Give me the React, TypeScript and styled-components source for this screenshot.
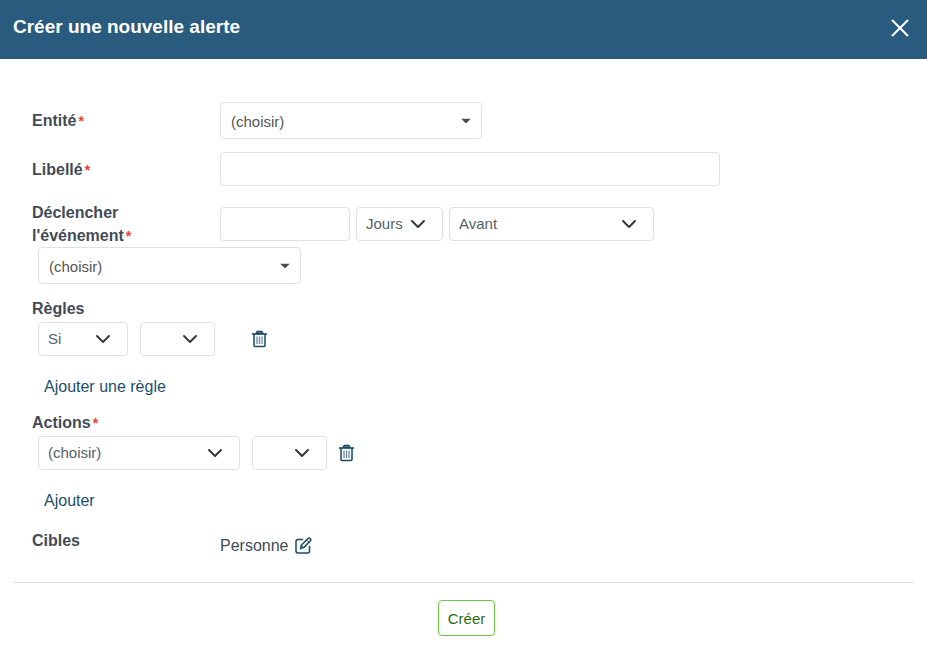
import React, { useId } from "react";
import styled, { createGlobalStyle, css } from "styled-components";

const GlobalStyle = createGlobalStyle`
  *, *::before, *::after { box-sizing: border-box; }
  body {
    margin: 0;
    background: #fff;
    color: #434c56;
    font-family: "Liberation Sans", Arial, sans-serif;
    font-size: 16px;
    line-height: 23px;
  }
`;

const Header = styled.header`
  display: flex;
  justify-content: space-between;
  align-items: flex-start;
  min-height: 59px;
  padding: 15px 17px 0 13px;
  background: #295b7e;
  color: #fff;
`;

const Title = styled.h1`
  margin: 0;
  font-size: 19px;
  font-weight: bold;
  line-height: 23px;
`;

const IconButton = styled.button`
  display: inline-flex;
  align-items: center;
  justify-content: center;
  padding: 0;
  border: 0;
  background: none;
  color: #184a66;
  cursor: pointer;
`;

const CloseButton = styled(IconButton)`
  padding-top: 3px;
  color: #fff;
`;

const Form = styled.form`
  padding: 43px 13px 0;
`;

const Fields = styled.div`
  padding: 0 19px 25px;
`;

const Row = styled.div<{ $top?: number; $align?: "center" | "start" }>`
  display: grid;
  grid-template-columns: 188px minmax(0, 1fr);
  align-items: ${(p) => p.$align ?? "center"};
  margin-top: ${(p) => p.$top ?? 0}px;
`;

const labelStyle = css`
  font-weight: bold;
  line-height: 23px;
`;

const Label = styled.label`
  ${labelStyle}
  max-width: 130px;
`;

const GroupLabel = styled.span`
  ${labelStyle}
  display: block;
`;

const Required = styled.span`
  margin-left: 2px;
  color: #f5392f;
  font-size: 14px;
  font-weight: bold;
  line-height: 1;
`;

const Controls = styled.div<{ $gap?: number }>`
  display: flex;
  align-items: center;
  gap: ${(p) => p.$gap ?? 6}px;
`;

const EventControls = styled(Controls)`
  padding-top: 6px;
`;

const Group = styled.section`
  margin-top: 13px;
`;

const Indent = styled.div`
  padding: 0 6px;
`;

const GroupControls = styled(Controls)`
  margin: 2px 6px 0;
`;

const fieldStyle = css`
  height: 34px;
  border: 1px solid #dee1e3;
  border-radius: 4px;
  background: #fff;
  color: #555f69;
  font-family: inherit;
  font-size: 15px;
`;

const TextInput = styled.input<{ $width: number }>`
  ${fieldStyle}
  width: ${(p) => p.$width}px;
  max-width: 100%;
  padding: 0 9px;
`;

const SelectWrap = styled.span<{ $width: number }>`
  position: relative;
  display: block;
  width: ${(p) => p.$width}px;
  max-width: 100%;
`;

const SelectBox = styled.select<{ $tall?: boolean }>`
  ${fieldStyle}
  display: block;
  width: 100%;
  padding: 0 9px 2px;
  appearance: none;
  ${(p) =>
    p.$tall &&
    css`
      height: 37px;
      padding: 2px 10px 0;
      color: #555;
    `}
`;

const Arrow = styled.svg<{ $right: number }>`
  position: absolute;
  top: 50%;
  right: ${(p) => p.$right}px;
  transform: translateY(-50%);
  pointer-events: none;
`;

const TrashButton = styled(IconButton)<{ $space: number }>`
  margin-left: ${(p) => p.$space}px;
`;

const AddLink = styled.a`
  display: inline-block;
  margin: 19px 12px 0;
  color: #204f6b;
  text-decoration: none;
`;

const Target = styled.div`
  display: flex;
  align-items: center;
  gap: 6px;
  padding-top: 5px;
`;

const Footer = styled.footer`
  display: flex;
  justify-content: center;
  padding: 17px 0 27px 6px;
  border-top: 1px solid #d9dbdc;
`;

const SubmitButton = styled.button`
  height: 36px;
  padding: 0 9px;
  border: 1px solid #6cc644;
  border-radius: 4px;
  background: #fff;
  color: #2b6a11;
  font-family: inherit;
  font-size: 15px;
  cursor: pointer;
`;

type SelectProps = {
  label?: string;
  id?: string;
  value: string;
  width: number;
  caret?: boolean;
};

function Select({ label, id, value, width, caret }: SelectProps) {
  return (
    <SelectWrap $width={width}>
      <SelectBox id={id} aria-label={label} $tall={caret} defaultValue={value}>
        <option value={value}>{value}</option>
      </SelectBox>
      {caret ? (
        <Arrow $right={11} width="10" height="5" viewBox="0 0 10 5" aria-hidden="true">
          <path d="M0 0h10L5 5z" fill="#4d4d4d" />
        </Arrow>
      ) : (
        <Arrow $right={17} width="16" height="10" viewBox="0 0 16 10" aria-hidden="true">
          <path
            d="M2 2l6 6 6-6"
            fill="none"
            stroke="#343a40"
            strokeWidth="2"
            strokeLinecap="round"
            strokeLinejoin="round"
          />
        </Arrow>
      )}
    </SelectWrap>
  );
}

function Trash({ label, space }: { label: string; space: number }) {
  return (
    <TrashButton type="button" aria-label={label} $space={space}>
      <svg width="15" height="18" viewBox="0 0 15 18" fill="none" stroke="currentColor" aria-hidden="true">
        <path d="M4 3.500L5 1.500h5l1 2z" fill="#8fa9b8" strokeWidth="1.300" strokeLinejoin="round" />
        <path d="M0 4h15" strokeWidth="1.600" />
        <path d="M2 4v11.500q0 1 1 1h9q1 0 1-1V4" strokeWidth="1.500" />
        <path d="M5 6.500V14M7.500 6.500V14M10 6.500V14" strokeWidth="1.300" strokeOpacity=".65" />
      </svg>
    </TrashButton>
  );
}

export default function App() {
  const id = useId();
  return (
    <>
      <GlobalStyle />
      <Header>
        <Title>Créer une nouvelle alerte</Title>
        <CloseButton type="button" aria-label="Fermer">
          <svg width="20" height="20" viewBox="0 0 20 20" aria-hidden="true">
            <path d="M2 2l16 16M18 2L2 18" stroke="currentColor" strokeWidth="2" />
          </svg>
        </CloseButton>
      </Header>
      <Form onSubmit={(e) => e.preventDefault()}>
        <Fields>
          <Row>
            <Label htmlFor={`${id}-entity`}>
              Entité<Required>*</Required>
            </Label>
            <Select id={`${id}-entity`} value="(choisir)" width={262} caret />
          </Row>
          <Row $top={13}>
            <Label htmlFor={`${id}-name`}>
              Libellé<Required>*</Required>
            </Label>
            <TextInput id={`${id}-name`} type="text" $width={500} />
          </Row>
          <Row $top={15} $align="start">
            <Label htmlFor={`${id}-delay`}>
              Déclencher l'événement<Required>*</Required>
            </Label>
            <EventControls>
              <TextInput id={`${id}-delay`} type="text" $width={130} />
              <Select label="Unité" value="Jours" width={87} />
              <Select label="Moment" value="Avant" width={205} />
            </EventControls>
          </Row>
          <Indent>
            <Select label="Événement" value="(choisir)" width={263} caret />
          </Indent>
          <Group>
            <GroupLabel>Règles</GroupLabel>
            <GroupControls $gap={12}>
              <Select label="Condition" value="Si" width={90} />
              <Select label="Critère" value="" width={75} />
              <Trash label="Supprimer la règle" space={25} />
            </GroupControls>
            <AddLink href="#regle">Ajouter une règle</AddLink>
          </Group>
          <Group>
            <GroupLabel>
              Actions<Required>*</Required>
            </GroupLabel>
            <GroupControls $gap={12}>
              <Select label="Action" value="(choisir)" width={202} />
              <Select label="Option" value="" width={75} />
              <Trash label="Supprimer l'action" space={0} />
            </GroupControls>
            <AddLink href="#action">Ajouter</AddLink>
          </Group>
          <Row $top={17} $align="start">
            <GroupLabel>Cibles</GroupLabel>
            <Target>
              Personne
              <IconButton type="button" aria-label="Modifier les cibles">
                <svg
                  width="17"
                  height="17"
                  viewBox="0 0 17 17"
                  fill="none"
                  stroke="currentColor"
                  strokeWidth="1.5"
                  strokeLinecap="round"
                  strokeLinejoin="round"
                  aria-hidden="true"
                >
                  <path d="M7.500 2.500H3Q1 2.500 1 4.500v9.500q0 2 2 2h9.500q2 0 2-2V9.500" />
                  <path d="M5.500 11.500l.8-3.300 6.700-6.700q1-1 2.200.1 1.200 1.200.2 2.200L8.700 10.600z" />
                  <path d="M11.700 3l2.300 2.300M6.300 8.400l2.200 2" strokeWidth="1" />
                </svg>
              </IconButton>
            </Target>
          </Row>
        </Fields>
        <Footer>
          <SubmitButton type="submit">Créer</SubmitButton>
        </Footer>
      </Form>
    </>
  );
}
